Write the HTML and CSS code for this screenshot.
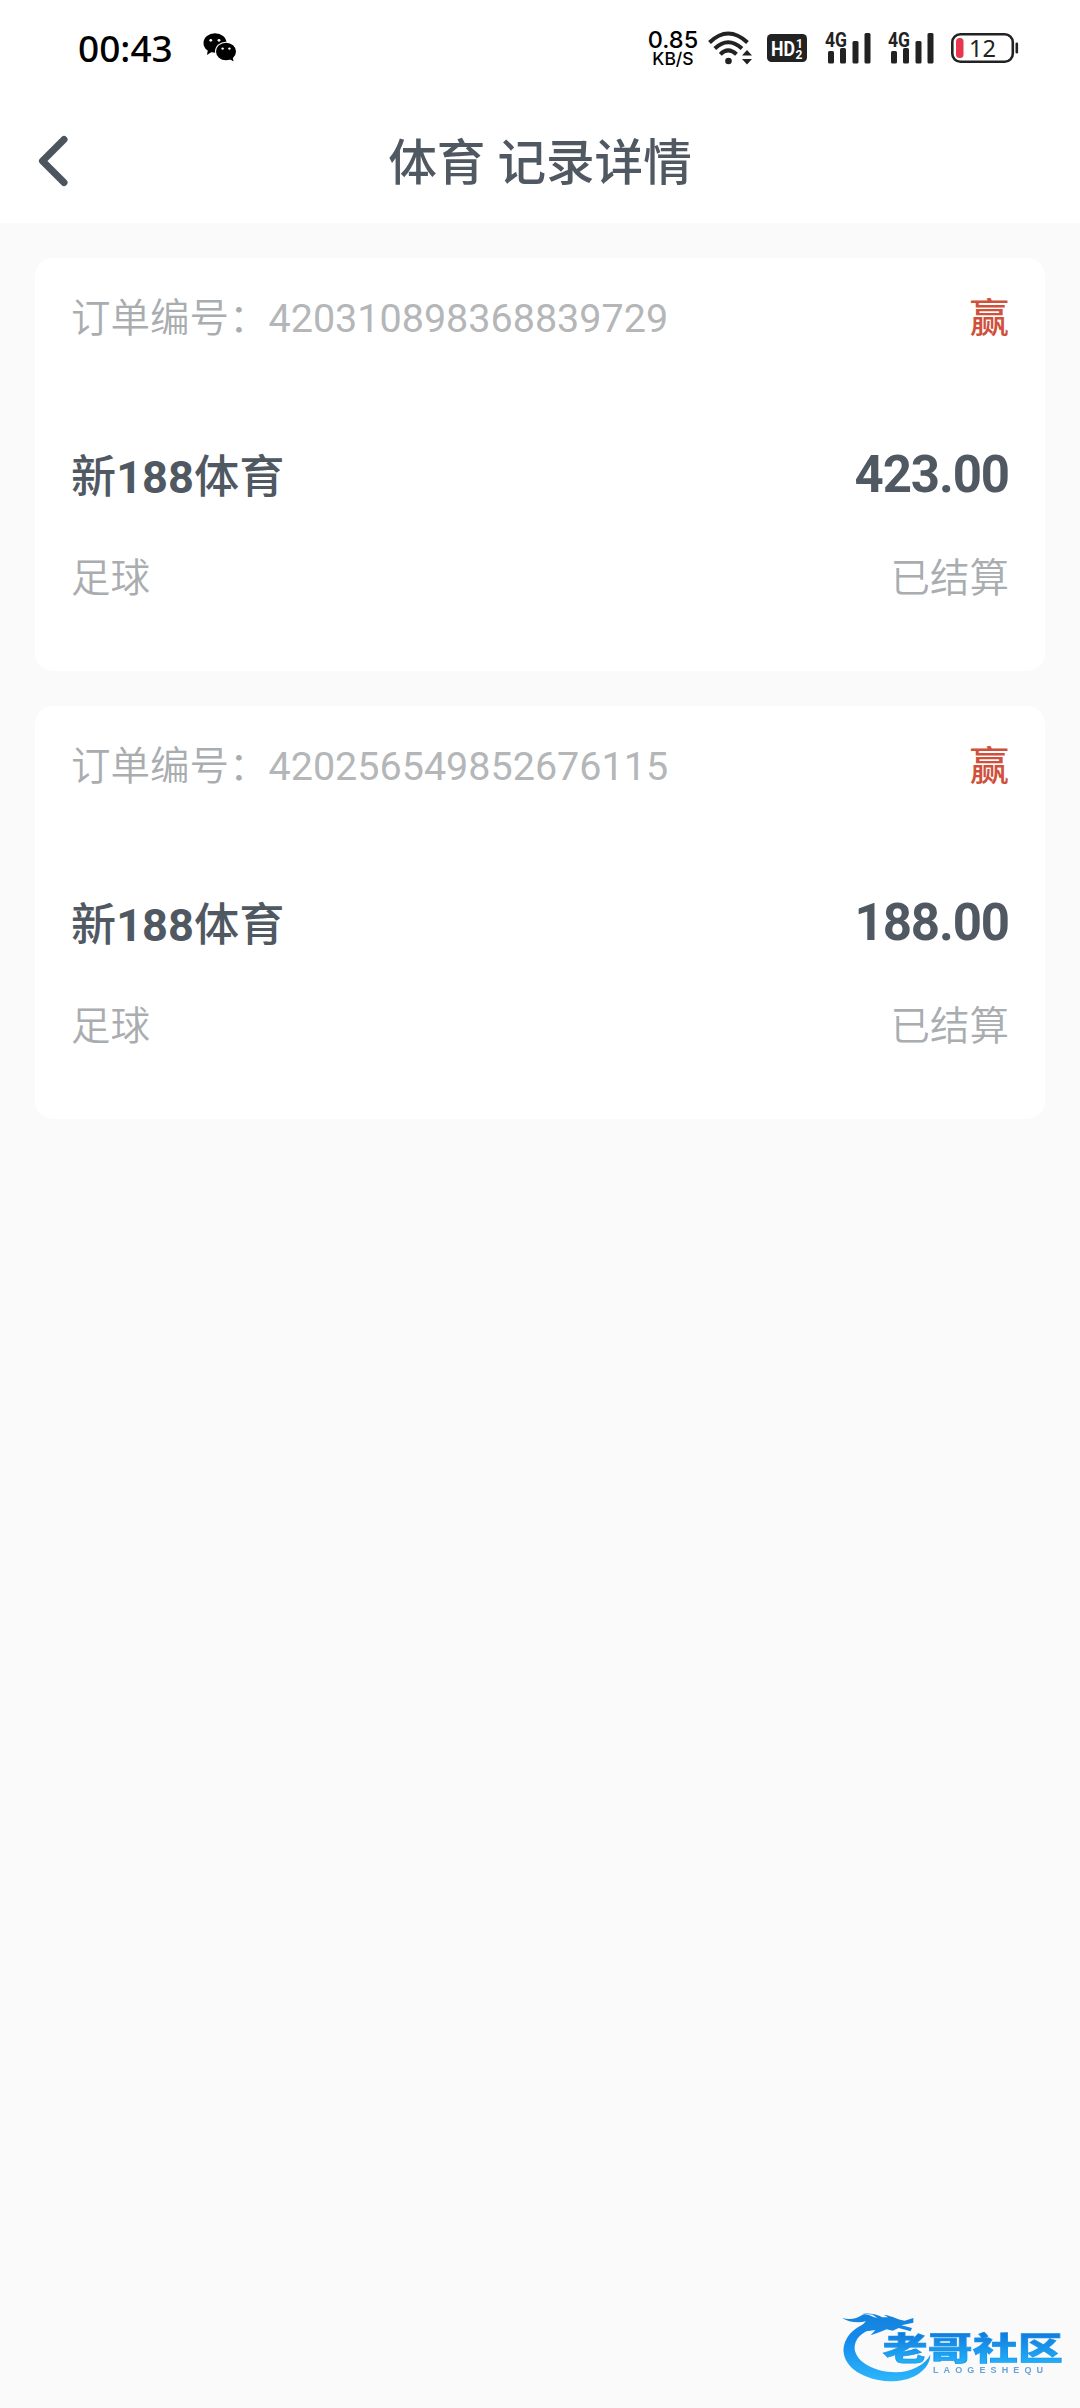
FILE: index.html
```html
<!DOCTYPE html>
<html lang="zh-CN">
<head>
  <meta charset="UTF-8" />
  <title>体育 记录详情</title>
  <link rel="stylesheet" href="styles.css">
</head>
<body>

  <div class="status-bar">
    <span class="time">00:43</span>
    <svg class="wechat" width="34" height="30" viewBox="0 0 34 30">
      <ellipse cx="12" cy="10" rx="11.5" ry="9.8" />
      <path d="M5 16 L4 22 L10 18 Z" />
      <ellipse cx="23" cy="18.5" rx="11" ry="9.8" fill="#fff" />
      <ellipse cx="23" cy="18.5" rx="10" ry="8.8" />
      <path d="M25 25 L30.5 28.5 L29.5 23 Z" />
      <g fill="#fff">
        <circle cx="7.8" cy="7.3" r="1.4" /><circle cx="16" cy="7.3" r="1.4" />
        <circle cx="19.6" cy="15.6" r="1.2" /><circle cx="26.4" cy="15.6" r="1.2" />
      </g>
    </svg>

    <div class="status-right">
      <div class="speed"><span>0.85</span><small>KB/S</small></div>
      <svg class="wifi" width="46" height="36" viewBox="0 0 46 36">
        <g fill="none" stroke="#222" stroke-width="4">
          <path d="M1.5 12.5 Q20 -5.5 39.5 12.5" />
          <path d="M6.8 18.5 Q20 6 34 18.5" />
          <path d="M12.3 24.3 Q20 16.5 28.5 24.3" />
        </g>
        <circle cx="20.5" cy="31" r="3.3" fill="#222" />
        <path d="M34 25.5 L39 20 L44 25.5 Z M34 29 L39 34.5 L44 29 Z" fill="#222" />
      </svg>
      <svg class="hd" width="40" height="28" viewBox="0 0 40 28">
        <rect width="40" height="28" rx="4.5" fill="#222" />
        <text x="4" y="21.5" font-size="20" textLength="24" lengthAdjust="spacingAndGlyphs">HD</text>
        <text x="29" y="13.5" font-size="12">1</text>
        <text x="28.5" y="24.5" font-size="12">2</text>
      </svg>
      <svg class="signal" width="48" height="42" viewBox="0 -4 48 42">
        <text x="0" y="15.5" font-size="19.5" textLength="22" lengthAdjust="spacingAndGlyphs">4G</text>
        <rect x="3" y="20" width="6" height="12.5" rx="1.5" />
        <rect x="15" y="17" width="6" height="15.5" rx="1.5" />
        <rect x="27.5" y="10" width="6" height="22.5" rx="1.5" />
        <rect x="39.5" y="2" width="6" height="30.5" rx="1.5" />
      </svg>
      <svg class="signal" width="48" height="42" viewBox="0 -4 48 42">
        <text x="0" y="15.5" font-size="19.5" textLength="22" lengthAdjust="spacingAndGlyphs">4G</text>
        <rect x="3" y="20" width="6" height="12.5" rx="1.5" />
        <rect x="15" y="17" width="6" height="15.5" rx="1.5" />
        <rect x="27.5" y="10" width="6" height="22.5" rx="1.5" />
        <rect x="39.5" y="2" width="6" height="30.5" rx="1.5" />
      </svg>
      <svg class="battery" width="68" height="30" viewBox="0 0 68 30">
        <rect x="1.3" y="1.3" width="60.5" height="27.4" rx="8" fill="none" stroke="#222" stroke-width="2.6" />
        <rect x="5" y="5" width="7.5" height="20" rx="3.5" fill="#e5374e" />
        <rect x="64.5" y="9.5" width="2.6" height="11" rx="1.3" fill="#222" />
        <text x="18" y="23.5" font-size="23.5" textLength="27" lengthAdjust="spacingAndGlyphs">12</text>
      </svg>
    </div>
  </div>

  <div class="nav">
    <svg class="back" width="32" height="52" viewBox="0 0 32 52">
      <path d="M27 4.5 L5.5 26 L27 47.5" />
    </svg>
    <h1>体育 记录详情</h1>
  </div>

  <div class="list">
    <div class="card">
      <div class="row order"><span>订单编号：<span class="num">420310898368839729</span></span><span class="win">赢</span></div>
      <div class="row main"><span class="name">新<b>188</b>体育</span><span class="amount">423.00</span></div>
      <div class="row sub"><span>足球</span><span>已结算</span></div>
    </div>
    <div class="card">
      <div class="row order"><span>订单编号：<span class="num">420256549852676115</span></span><span class="win">赢</span></div>
      <div class="row main"><span class="name">新<b>188</b>体育</span><span class="amount">188.00</span></div>
      <div class="row sub"><span>足球</span><span>已结算</span></div>
    </div>
  </div>

  <svg class="watermark" width="250" height="108" viewBox="0 0 750 324">
    <defs>
      <linearGradient id="blue" gradientUnits="userSpaceOnUse" x1="0" y1="50" x2="0" y2="240">
        <stop offset="0" stop-color="#1583dc" />
        <stop offset="0.35" stop-color="#1389ec" />
        <stop offset="1" stop-color="#2cb5fb" />
      </linearGradient>
      <linearGradient id="word" x1="0" y1="0" x2="0" y2="1">
        <stop offset="0.2" stop-color="#1479dc" />
        <stop offset="0.9" stop-color="#20b4fa" />
      </linearGradient>
    </defs>
    <!-- dragon: body, then head -->
    <g fill="url(#blue)">
      <path d="M114 68 C62 84 38 122 41 158 C48 212 118 244 190 244 C252 241 300 208 301 164 C286 192 246 217 196 217 C134 216 80 188 74 148 C72 116 96 94 136 84 Z" />
      <path d="M36 54 C60 60 80 56 98 44 C112 38 128 52 142 54 L128 44 L96 40 C120 40 140 42 156 52 L174 52 L162 44 C188 48 206 60 224 62 L250 54 L250 68 L214 76 L246 84 L242 94 L206 84 L188 92 L170 88 L150 96 L122 106 L136 90 L110 94 L124 76 L96 76 L108 64 C84 70 54 66 36 54 Z" />
    </g>
    <g class="wordmark">
      <text transform="translate(158 181) scale(1.43 1)" font-size="94" fill="url(#word)" textLength="378">老哥社区</text>
    </g>
    <text class="latin" x="309" y="220" font-size="27" textLength="330" lengthAdjust="spacing">LAOGESHEQU</text>
  </svg>

</body>
</html>
```
FILE: styles.css
```css
* {
  box-sizing: border-box;
}

body {
  margin: 0;
  min-height: 2408px;
  background-color: #fafafa;
  font-family: Roboto, "Noto Sans CJK SC", sans-serif;
  color: #505862;
}

svg {
  display: block;
  flex: none;
}

.status-bar {
  display: flex;
  align-items: center;
  height: 98px;
  padding: 0 61px 2px 78px;
  background-color: #fff;
  color: #000;
}

.time {
  width: 125px;
  font-family: "Noto Sans", sans-serif;
  font-size: 37px;
  font-weight: 500;
  line-height: 48px;
}

.status-right {
  display: flex;
  align-items: center;
  margin-left: auto;
}

.speed {
  display: flex;
  flex-direction: column;
  align-items: center;
  width: 52px;
  margin-right: 9px;
  font-family: Inter, sans-serif;
  font-size: 23.5px;
  font-weight: 500;
  line-height: 20px;
}

.speed small {
  font-size: 17.5px;
  line-height: 17px;
}

.wifi {
  margin-right: 13px;
}

.hd {
  margin-right: 18px;
}

.hd text {
  fill: #fff;
  font-weight: bold;
}

.signal {
  margin-right: 15px;
  fill: #222;
}

.signal text {
  font-weight: bold;
}

.battery text {
  fill: #222;
  font-family: "Noto Sans", sans-serif;
}

.nav {
  display: grid;
  grid-template-columns: 100px 1fr 100px;
  align-items: center;
  height: 125px;
  background-color: #fff;
}

.back {
  margin-left: 37px;
  fill: none;
  stroke: #4c555e;
  stroke-width: 7;
  stroke-linecap: round;
  stroke-linejoin: round;
}

h1 {
  margin: 0;
  padding-top: 6px;
  text-align: center;
  font-size: 48.6px;
  font-weight: 500;
  line-height: 60px;
}

.list {
  display: flex;
  flex-direction: column;
  gap: 35px;
  padding: 35px;
}

.card {
  height: 413px;
  padding: 26px 36px;
  border-radius: 18px;
  background-color: #fff;
}

.row {
  display: flex;
  align-items: center;
  justify-content: space-between;
  height: 60px;
}

.order,
.sub {
  color: #a9adb0;
  font-size: 39.5px;
  font-weight: 350;
}

.num {
  color: #b4b6b8;
  font-weight: 400;
}

.win {
  color: #d0503c;
  font-weight: 500;
}

.main {
  margin-top: 101px;
}

.name {
  padding-top: 6px;
  font-size: 45.2px;
  font-weight: 500;
}

.name,
.amount {
  line-height: 60px;
}

.amount {
  font-size: 51px;
  font-weight: bold;
  letter-spacing: -1.1px;
}

.sub {
  margin-top: 39px;
}

.watermark {
  position: absolute;
  left: 830px;
  top: 2300px;
  filter: blur(0.7px);
}

.wordmark text {
  font-family: "Noto Sans CJK SC", sans-serif;
  font-weight: 900;
  stroke: #1a94ec;
  stroke-width: 2;
}

.latin {
  fill: #6aa3d8;
  font-family: "Liberation Sans", sans-serif;
  font-weight: bold;
}
```
